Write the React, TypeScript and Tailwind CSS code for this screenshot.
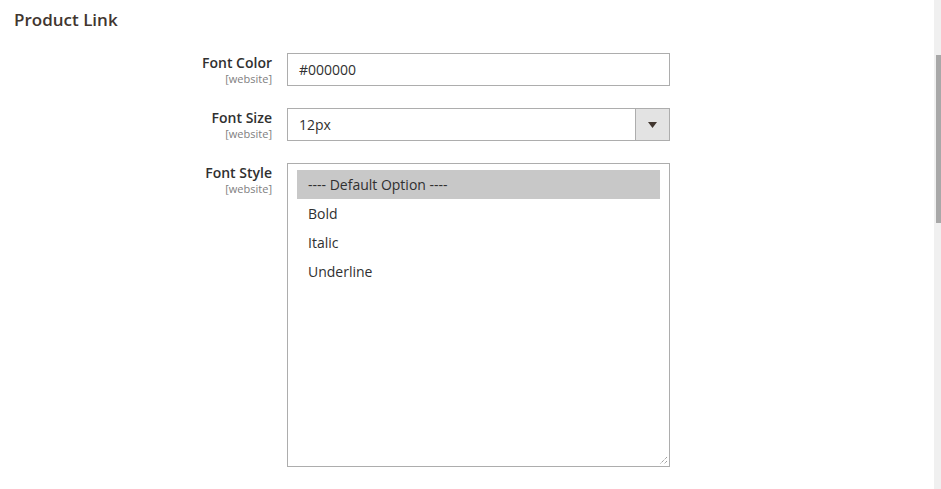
import React from 'react';

const font = { fontFamily: '"Open Sans", "Noto Sans", sans-serif' };

function FieldLabel({ title }: { title: string }) {
  return (
    <div className="w-[272px] shrink-0 text-right">
      <div className="text-[14px] font-semibold leading-[19px] text-[#303030]">{title}</div>
      <div className="text-[11px] leading-[13px] text-[#808080]">[website]</div>
    </div>
  );
}

export default function App() {
  const options = ['---- Default Option ----', 'Bold', 'Italic', 'Underline'];

  return (
    <div className="flex h-screen bg-white text-[#303030]" style={font}>
      <main className="flex-1">
        <h2 className="pl-[14px] pt-[8px] text-[17px] font-semibold leading-[24px] text-[#41362f]">
          Product Link
        </h2>

        <div className="mt-[21px] flex flex-col gap-[22px]">
          <div className="flex gap-[15px]">
            <FieldLabel title="Font Color" />
            <div className="flex h-[33px] w-[383px] items-center border border-[#adadad] px-[11px] text-[14px]">
              #000000
            </div>
          </div>

          <div className="flex gap-[15px]">
            <FieldLabel title="Font Size" />
            <div className="flex h-[33px] w-[383px] border border-[#adadad] text-[14px]">
              <div className="flex flex-1 items-center px-[11px]">12px</div>
              <div className="flex w-[34px] items-center justify-center border-l border-[#adadad] bg-[#e3e3e3]">
                <svg width="9" height="6" viewBox="0 0 9 6">
                  <path d="M0 0h9L4.5 6z" fill="#41362f" />
                </svg>
              </div>
            </div>
          </div>

          <div className="flex gap-[15px]">
            <FieldLabel title="Font Style" />
            <div className="relative h-[304px] w-[383px] border border-[#adadad] px-[9px] pt-[6px] text-[14px]">
              {options.map((o, i) => (
                <div
                  key={o}
                  className={`flex h-[29px] items-center px-[11px] ${i === 0 ? 'bg-[#c8c8c8]' : ''}`}
                >
                  {o}
                </div>
              ))}
              <svg className="absolute bottom-[1px] right-[1px]" width="10" height="10" viewBox="0 0 10 10">
                <path d="M9 2L2 9M9 6L6 9" stroke="#777" strokeWidth="1" strokeDasharray="1 1" />
              </svg>
            </div>
          </div>
        </div>
      </main>

      <div className="w-[7px] shrink-0 bg-[#f0f0f0] pt-[55px]">
        <div className="ml-[2px] h-[168px] w-[5px] bg-[#a8a8a8]" />
      </div>
    </div>
  );
}
